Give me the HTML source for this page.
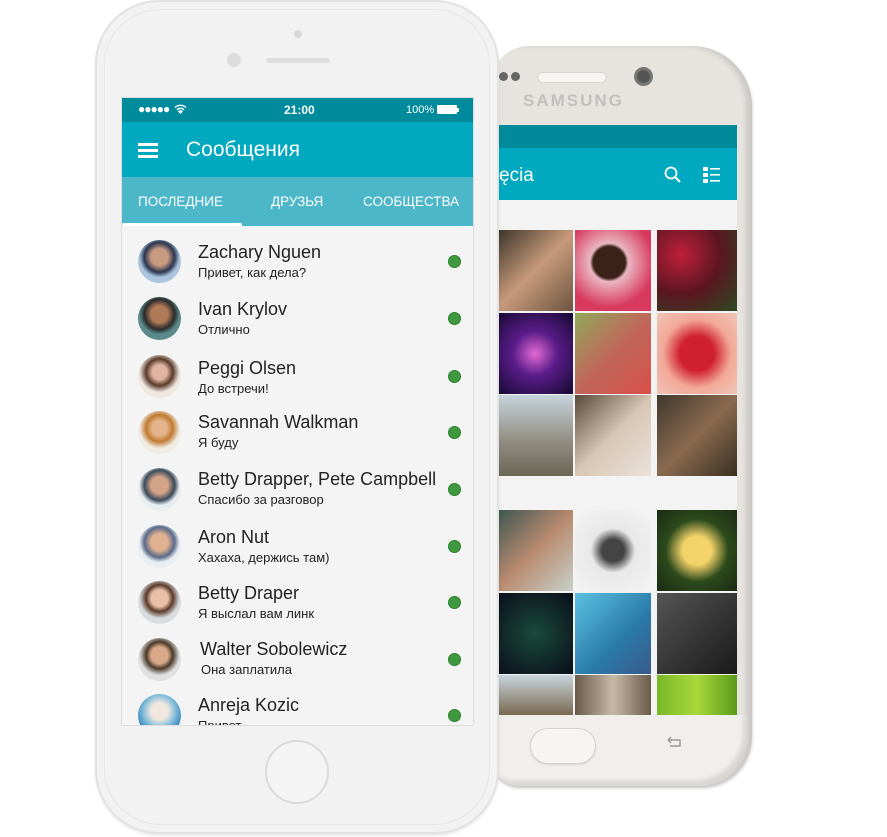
<!DOCTYPE html>
<html><head><meta charset="utf-8"><style>
*{margin:0;padding:0;box-sizing:border-box}
body{width:887px;height:837px;background:#fff;position:relative;overflow:hidden;font-family:"Liberation Sans","DejaVu Sans",sans-serif}
.abs{position:absolute}
.sam{left:490px;top:46px;width:262px;height:740px;background:#e7e4e0;border-radius:40px 60px 50px 30px;box-shadow:inset -6px 0 6px rgba(0,0,0,.12),0 2px 3px rgba(0,0,0,.25)}
.sbot{left:490px;top:715px;width:258px;height:70px;background:#f1efeb;border-radius:0 0 50px 30px;box-shadow:inset -5px -4px 4px rgba(0,0,0,.1)}
.sscreen{left:497px;top:125px;width:240px;height:590px;background:#f3f3f3;overflow:hidden}
.tile{position:absolute;width:76px;height:81px}
.ip{left:97px;top:2px;width:400px;height:830px;background:#f2f2f2;border-radius:62px;box-shadow:0 0 0 2px #e2e2e2,0 2px 5px rgba(0,0,0,.2)}
.iscreen{left:121px;top:97px;width:353px;height:629px;background:#f4f4f4;overflow:hidden;border:1px solid #ddd}
.row{position:absolute;left:0;width:353px;height:56px}
.av{position:absolute;left:16px;width:43px;height:43px;border-radius:50%}
.nm{position:absolute;left:76px;font-size:18px;color:#222}
.sb{position:absolute;left:76px;font-size:13px;color:#222}
.dot{position:absolute;left:326px;width:13px;height:13px;border-radius:50%;background:#3f9a3f;border:1px solid #2f7f2f}
</style></head><body>
<div class="abs sam"></div>
<div class="abs sbot"></div>
<div class="abs" style="left:499px;top:72px;width:9px;height:9px;border-radius:50%;background:#666"></div>
<div class="abs" style="left:511px;top:72px;width:9px;height:9px;border-radius:50%;background:#666"></div>
<div class="abs" style="left:537px;top:72px;width:70px;height:11px;border-radius:6px;background:#f7f5f2;border:1px solid #d8d5d0"></div>
<div class="abs" style="left:634px;top:67px;width:19px;height:19px;border-radius:50%;background:#555;border:3px solid #777"></div>
<div class="abs" style="left:523px;top:91px;font-size:17px;font-weight:bold;letter-spacing:2px;color:#c2c0bd">SAMSUNG</div>
<div class="abs sscreen">
 <div class="abs" style="left:0;top:0;width:240px;height:23px;background:#008a9a"></div>
 <div class="abs" style="left:0;top:23px;width:240px;height:52px;background:#00a9bf"></div>
 <div class="abs" style="left:2px;top:40px;font-size:19px;color:#fff">ęcia</div>
 <svg class="abs" style="left:166px;top:40px" width="20" height="20" viewBox="0 0 20 20"><circle cx="8" cy="8" r="5.5" fill="none" stroke="#fff" stroke-width="1.8"/><path d="M12 12l5 5" stroke="#fff" stroke-width="2"/></svg>
 <svg class="abs" style="left:206px;top:41px" width="18" height="18" viewBox="0 0 18 18" fill="#fff"><rect x="0" y="1" width="5" height="4"/><rect x="0" y="7" width="5" height="4"/><rect x="0" y="13" width="5" height="4"/><rect x="7" y="2" width="10" height="1.6"/><rect x="7" y="8" width="10" height="1.6"/><rect x="7" y="14" width="10" height="1.6"/></svg>
 <div class="tile" style="left:0;top:105px;background:linear-gradient(135deg,#3a3328,#c79a7a 50%,#6b5440)"></div>
 <div class="tile" style="left:78px;top:105px;background:radial-gradient(circle at 45% 40%,#3b2218 25%,#e9b6c2 30%,#d83a5e 70%)"></div>
 <div class="tile" style="left:160px;top:105px;width:80px;background:radial-gradient(circle at 30% 30%,#c0203a,#5b1620 50%,#2d4a22)"></div>
 <div class="tile" style="left:0;top:188px;background:radial-gradient(circle,#e36ad4,#5a1c8a 40%,#150a30)"></div>
 <div class="tile" style="left:78px;top:188px;background:linear-gradient(135deg,#8fa85a,#c0675a 50%,#d84f48)"></div>
 <div class="tile" style="left:160px;top:188px;width:80px;background:radial-gradient(ellipse at 50% 50%,#d0202e 30%,#f2a898 60%,#f0c6b8)"></div>
 <div class="tile" style="left:0;top:270px;background:linear-gradient(180deg,#c7d3dc,#8f8a7e 60%,#6b6655)"></div>
 <div class="tile" style="left:78px;top:270px;background:linear-gradient(135deg,#5a4a3a,#d8c6b4 50%,#eae2da)"></div>
 <div class="tile" style="left:160px;top:270px;width:80px;background:linear-gradient(135deg,#40382c,#8a6a50 50%,#3a3020)"></div>
 <div class="tile" style="left:0;top:385px;background:linear-gradient(135deg,#3c5650,#b88a70 50%,#c8d0c8)"></div>
 <div class="tile" style="left:78px;top:385px;background:radial-gradient(circle,#444 20%,#e8e8e8 40%,#f4f4f4)"></div>
 <div class="tile" style="left:160px;top:385px;width:80px;background:radial-gradient(circle,#f4d26a 25%,#2c4a1c 55%,#1a2a12)"></div>
 <div class="tile" style="left:0;top:468px;background:radial-gradient(circle,#1a4a3a,#0a0e1a)"></div>
 <div class="tile" style="left:78px;top:468px;background:linear-gradient(135deg,#5ac0e0,#2a7aa8 60%,#3a5a8a)"></div>
 <div class="tile" style="left:160px;top:468px;width:80px;background:linear-gradient(135deg,#555,#1a1a1a)"></div>
 <div class="tile" style="left:0;top:550px;height:40px;background:linear-gradient(180deg,#c8d4dc,#7a6a50)"></div>
 <div class="tile" style="left:78px;top:550px;height:40px;background:linear-gradient(90deg,#6a5a48,#c8b8a8 50%,#6a5a48)"></div>
 <div class="tile" style="left:160px;top:550px;width:80px;height:40px;background:linear-gradient(90deg,#7ab82a,#a8d83a,#5a9a1a)"></div>
</div>
<div class="abs" style="left:530px;top:728px;width:66px;height:36px;border-radius:18px;background:#f6f5f3;border:1px solid #d4d2ce;box-shadow:0 1px 2px rgba(0,0,0,.1)"></div>
<svg class="abs" style="left:664px;top:735px" width="22" height="16" viewBox="0 0 22 16"><path d="M4 5h12v6H6M4 5l3-3M4 5l3 3" fill="none" stroke="#999" stroke-width="1.4"/></svg>

<div class="abs ip"></div>
<div class="abs" style="left:104px;top:9px;width:386px;height:816px;border-radius:56px;border:1px solid #e6e6e6"></div>
<div class="abs" style="left:294px;top:30px;width:8px;height:8px;border-radius:50%;background:#d8d8d8"></div>
<div class="abs" style="left:227px;top:53px;width:14px;height:14px;border-radius:50%;background:#dcdcdc"></div>
<div class="abs" style="left:266px;top:58px;width:64px;height:5px;border-radius:3px;background:#dedede"></div>
<div class="abs" style="left:265px;top:740px;width:64px;height:64px;border-radius:50%;border:2px solid #dadada;background:#f4f4f4"></div>
<div class="abs iscreen">
 <div class="abs" style="left:0;top:0;width:353px;height:24px;background:#008b9c;color:#fff;font-size:12px">
  <span class="abs" style="left:16px;top:4px;letter-spacing:-1px">●●●●●</span>
  <svg class="abs" style="left:52px;top:6px" width="13" height="10" viewBox="0 0 13 10"><path d="M1 3.5a8 8 0 0 1 11 0M3 5.8a5 5 0 0 1 7 0M6.5 9l-1.5-1.5a2 2 0 0 1 3 0z" fill="none" stroke="#fff" stroke-width="1.4"/></svg>
  <span class="abs" style="left:162px;top:5px;font-weight:bold">21:00</span>
  <span class="abs" style="left:284px;top:6px;font-size:11px">100%</span>
  <div class="abs" style="left:315px;top:7px;width:20px;height:9px;background:#fff;border-radius:1px"></div>
  <div class="abs" style="left:335px;top:10px;width:2px;height:4px;background:#fff"></div>
 </div>
 <div class="abs" style="left:0;top:24px;width:353px;height:55px;background:#00a9bf"></div>
 <div class="abs" style="left:16px;top:45px;width:20px;height:3px;background:#fff;box-shadow:0 6px 0 #fff,0 12px 0 #fff"></div>
 <div class="abs" style="left:64px;top:40px;font-size:21px;color:#fff">Сообщения</div>
 <div class="abs" style="left:0;top:79px;width:353px;height:49px;background:#4cb7c9;color:#fff;font-size:13.5px">
  <span class="abs" style="left:16px;top:17px">ПОСЛЕДНИЕ</span>
  <span class="abs" style="left:149px;top:17px">ДРУЗЬЯ</span>
  <span class="abs" style="left:241px;top:17px">СООБЩЕСТВА</span>
  <div class="abs" style="left:0;top:46px;width:120px;height:3px;background:#fff;border-radius:2px"></div>
 </div>
 <div class="row" style="top:136px"><div class="av" style="top:6px;background:radial-gradient(circle at 50% 40%,#c89a80 25%,#2a3550 45%,#a9c4dc 60%)"></div><div class="nm" style="top:8px">Zachary Nguen</div><div class="sb" style="top:31px">Привет, как дела?</div><div class="dot" style="top:21px"></div></div>
 <div class="row" style="top:193px"><div class="av" style="top:6px;background:radial-gradient(circle at 50% 40%,#b07a58 25%,#2a2a2a 45%,#5a8a8a 60%)"></div><div class="nm" style="top:8px">Ivan Krylov</div><div class="sb" style="top:31px">Отлично</div><div class="dot" style="top:21px"></div></div>
 <div class="row" style="top:251px"><div class="av" style="top:6px;background:radial-gradient(circle at 50% 40%,#e0b4a0 22%,#5a3a2a 40%,#f0e8e0 60%)"></div><div class="nm" style="top:9px">Peggi Olsen</div><div class="sb" style="top:32px">До встречи!</div><div class="dot" style="top:21px"></div></div>
 <div class="row" style="top:307px"><div class="av" style="top:6px;background:radial-gradient(circle at 50% 40%,#e4b48c 22%,#c07a30 40%,#f0ece4 60%)"></div><div class="nm" style="top:7px">Savannah Walkman</div><div class="sb" style="top:30px">Я буду</div><div class="dot" style="top:21px"></div></div>
 <div class="row" style="top:364px"><div class="av" style="top:6px;background:radial-gradient(circle at 50% 40%,#d4a488 25%,#3a4a5a 45%,#e8eef0 60%)"></div><div class="nm" style="top:7px">Betty Drapper, Pete Campbell</div><div class="sb" style="top:30px">Спасибо за разговор</div><div class="dot" style="top:21px"></div></div>
 <div class="row" style="top:421px"><div class="av" style="top:6px;background:radial-gradient(circle at 50% 40%,#e0b090 25%,#5a6a8a 45%,#e8eef2 60%)"></div><div class="nm" style="top:8px">Aron Nut</div><div class="sb" style="top:31px">Хахаха, держись там)</div><div class="dot" style="top:21px"></div></div>
 <div class="row" style="top:477px"><div class="av" style="top:6px;background:radial-gradient(circle at 50% 40%,#e8c0a8 25%,#5a3a2a 40%,#d8dde0 60%)"></div><div class="nm" style="top:8px">Betty Draper</div><div class="sb" style="top:31px">Я выслал вам линк</div><div class="dot" style="top:21px"></div></div>
 <div class="row" style="top:534px"><div class="av" style="top:6px;background:radial-gradient(circle at 50% 40%,#d8a888 25%,#4a3a2a 40%,#e0e0e0 60%)"></div><div class="nm" style="top:7px;left:78px">Walter Sobolewicz</div><div class="sb" style="top:30px;left:79px">Она заплатила</div><div class="dot" style="top:21px"></div></div>
 <div class="row" style="top:590px"><div class="av" style="top:6px;background:radial-gradient(circle at 50% 40%,#f0e8e0 25%,#7ab8d8 50%,#3a8ac0 70%)"></div><div class="nm" style="top:7px">Anreja Kozic</div><div class="sb" style="top:30px">Привет</div><div class="dot" style="top:21px"></div></div>
</div>
</body></html>
